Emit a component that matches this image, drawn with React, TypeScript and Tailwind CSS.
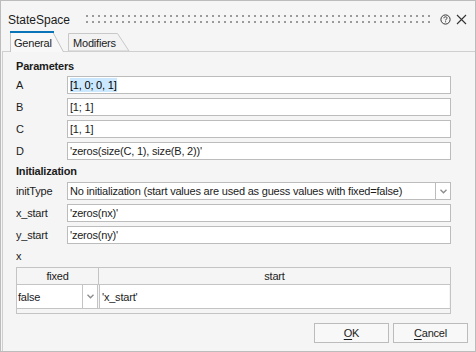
import React from "react";

const Chevron = () => (
  <svg width="7" height="5" viewBox="0 0 7 5">
    <path d="M0.5 0.8 L3.5 3.8 L6.5 0.8" fill="none" stroke="#8a8a8a" strokeWidth="1.3" />
  </svg>
);

const Input = ({ children }: { children: React.ReactNode }) => (
  <div className="h-[18px] w-[384px] border border-[#bcbcbc] bg-white flex items-center pl-[2px] leading-[14px] whitespace-nowrap overflow-hidden">
    {children}
  </div>
);

const Row = ({ label, children }: { label: string; children: React.ReactNode }) => (
  <div className="flex items-center h-[18px]">
    <div className="w-[51px] leading-[14px]">{label}</div>
    {children}
  </div>
);

export default function App() {
  return (
    <div className="w-[476px] h-[352px] border border-[#bcbcbc] bg-[#f5f5f5] flex flex-col text-[11px] tracking-[-0.2px] text-[#1b1b1b] font-['Liberation_Sans',Arial,sans-serif] overflow-hidden">
      {/* title bar */}
      <div className="h-[30px] flex items-start pt-[12px] pl-[7px] shrink-0">
        <div className="leading-[14px] w-[78px] text-[12px] tracking-normal">StateSpace</div>
        <svg width="344" height="8" className="mt-[2px]" viewBox="0 0 344 8">
          <defs>
            <pattern id="dots" x="0" y="0" width="6" height="6" patternUnits="userSpaceOnUse">
              <rect x="0" y="0" width="2" height="2" fill="#9a9a9a" />
            </pattern>
          </defs>
          <rect x="0" y="0" width="344" height="8" fill="url(#dots)" />
        </svg>
        <svg width="11" height="11" viewBox="0 0 11 11" className="ml-[10px] mt-[1px]">
          <circle cx="5.5" cy="5.5" r="4.6" fill="none" stroke="#333" strokeWidth="1" />
          <path d="M3.9 4.3 C3.9 3.2 4.6 2.8 5.5 2.8 C6.4 2.8 7.1 3.3 7.1 4.1 C7.1 5 5.6 5.2 5.6 6.4" fill="none" stroke="#333" strokeWidth="1" />
          <rect x="5.1" y="7.3" width="1" height="1" fill="#333" />
        </svg>
        <svg width="11" height="11" viewBox="0 0 11 11" className="ml-[5px] mt-[1px]">
          <path d="M1 1 L10 10 M10 1 L1 10" stroke="#333" strokeWidth="1.1" />
        </svg>
      </div>

      {/* tabs */}
      <div className="h-[20px] flex items-end pl-[9px] shrink-0 relative z-10">
        <div className="relative w-[54px] h-[21px] mb-[-1px]">
          <svg className="absolute inset-0" width="54" height="21" viewBox="0 0 54 21">
            <path d="M0.5 21 L0.5 1 L43 1 L53.5 21 Z" fill="#f8f8f8" stroke="none" />
            <path d="M0.5 21 L0.5 1" stroke="#c4c4c4" strokeWidth="1" />
            <path d="M43 1.5 L53.5 21" stroke="#c4c4c4" strokeWidth="1" />
            <rect x="0" y="0" width="44" height="2" fill="#0a74b8" />
          </svg>
          <div className="relative pl-[4px] pt-[5px] leading-[14px]">General</div>
        </div>
        <div className="relative w-[62px] h-[18px] ml-[4px]">
          <svg className="absolute inset-0" width="62" height="18" viewBox="0 0 62 18">
            <path d="M0.5 18 L0.5 0.5 L49.5 0.5 L61 18 Z" fill="#f3f3f3" stroke="#c8c8c8" strokeWidth="1" />
          </svg>
          <div className="relative pl-[5px] pt-[3px] leading-[14px]">Modifiers</div>
        </div>
      </div>

      {/* panel */}
      <div className="flex-1 ml-[1px] border-l border-t border-[#cfcfcf] flex flex-col pl-[13px]">
        <div className="mt-[7px] h-[14px] leading-[14px] font-bold">Parameters</div>
        <div className="mt-[3px] flex flex-col gap-[4px]">
          <Row label="A">
            <Input>
              <span className="bg-[#cce8ff] text-black">[1, 0; 0, 1]</span>
            </Input>
          </Row>
          <Row label="B">
            <Input>[1; 1]</Input>
          </Row>
          <Row label="C">
            <Input>[1, 1]</Input>
          </Row>
          <Row label="D">
            <Input>'zeros(size(C, 1), size(B, 2))'</Input>
          </Row>
        </div>
        <div className="mt-[4px] h-[14px] leading-[14px] font-bold">Initialization</div>
        <div className="mt-[4px] flex flex-col gap-[4px]">
          <Row label="initType">
            <div className="flex">
              <div className="h-[18px] w-[369px] border border-[#bcbcbc] bg-white flex items-center pl-[2px] leading-[14px] whitespace-nowrap overflow-hidden">
                No initialization (start values are used as guess values with fixed=false)
              </div>
              <div className="h-[18px] w-[15px] border border-l-0 border-[#bcbcbc] bg-white flex items-center justify-center">
                <Chevron />
              </div>
            </div>
          </Row>
          <Row label="x_start">
            <Input>'zeros(nx)'</Input>
          </Row>
          <Row label="y_start">
            <Input>'zeros(ny)'</Input>
          </Row>
        </div>
        <div className="mt-[5px] h-[14px] leading-[14px]">x</div>
        {/* table */}
        <div className="mt-[4px] w-[435px] border border-[#c4c4c4] flex flex-col">
          <div className="h-[17px] flex border-b border-[#c4c4c4]">
            <div className="w-[82px] border-r border-[#c4c4c4] flex items-center justify-center leading-[14px]">fixed</div>
            <div className="flex-1 flex items-center justify-center leading-[14px]">start</div>
          </div>
          <div className="h-[24px] flex border-b border-[#c4c4c4]">
            <div className="w-[81px] flex border-r border-[#c4c4c4] bg-white">
              <div className="flex-1 flex items-center pl-[1px] leading-[14px]">false</div>
              <div className="w-[15px] border-l border-[#c4c4c4] flex items-center justify-center">
                <Chevron />
              </div>
            </div>
            <div className="w-[1px]" />
            <div className="flex-1 border-l border-[#c4c4c4] bg-white flex items-center pl-[2px] leading-[14px] mr-[1px]">
              'x_start'
            </div>
          </div>
          <div className="h-[4px]" />
        </div>
        {/* buttons */}
        <div className="mt-[9px] flex justify-end gap-[4px] pr-[7px]">
          <button className="w-[75px] h-[20px] border border-[#bcbcbc] bg-[#f8f8f8] leading-[14px] text-[#1b1b1b]">
            <span className="underline underline-offset-2">O</span>K
          </button>
          <button className="w-[75px] h-[20px] border border-[#bcbcbc] bg-[#f8f8f8] leading-[14px] text-[#1b1b1b]">
            <span className="underline underline-offset-2">C</span>ancel
          </button>
        </div>
      </div>
    </div>
  );
}
